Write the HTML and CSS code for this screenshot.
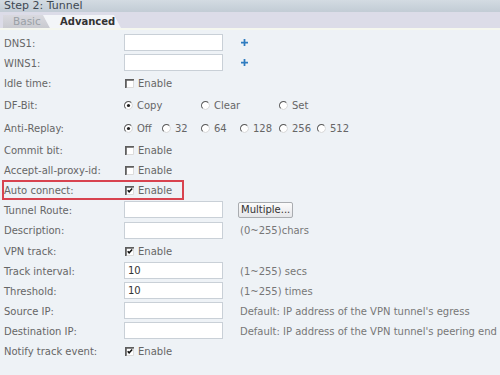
FILE: index.html
```html
<!DOCTYPE html>
<html>
<head>
<meta charset="utf-8">
<link rel="stylesheet" href="styles.css">
</head>
<body>
<svg class="defs" width="0" height="0">
  <symbol id="cb" viewBox="0 0 10 10">
    <rect x="0" y="0" width="10" height="10" fill="#fff"/>
    <path d="M0 1H10M1 0V10" stroke="#5e5e5e" stroke-width="2" fill="none"/>
    <path d="M9.5 2V9.5H2" stroke="#d6d6d6" stroke-width="1" fill="none"/>
  </symbol>
  <symbol id="cbon" viewBox="0 0 10 10">
    <rect x="0" y="0" width="10" height="10" fill="#fff"/>
    <path d="M0 1H10M1 0V10" stroke="#5e5e5e" stroke-width="2" fill="none"/>
    <path d="M9.5 2V9.5H2" stroke="#d6d6d6" stroke-width="1" fill="none"/>
    <path d="M3 4.6L4.6 6.4L8 2.8" stroke="#111" stroke-width="1.7" fill="none"/>
  </symbol>
  <symbol id="rd" viewBox="0 0 10 10">
    <circle cx="5" cy="5" r="4.3" fill="#fff"/>
    <path d="M1.9 8.1A4.3 4.3 0 0 1 8.1 1.9" stroke="#5a5a5a" stroke-width="1.2" fill="none"/>
    <path d="M8.1 1.9A4.3 4.3 0 0 1 1.9 8.1" stroke="#d4d4d4" stroke-width="1" fill="none"/>
  </symbol>
  <symbol id="rdon" viewBox="0 0 10 10">
    <circle cx="5" cy="5" r="4.3" fill="#fff"/>
    <path d="M1.9 8.1A4.3 4.3 0 0 1 8.1 1.9" stroke="#5a5a5a" stroke-width="1.2" fill="none"/>
    <path d="M8.1 1.9A4.3 4.3 0 0 1 1.9 8.1" stroke="#d4d4d4" stroke-width="1" fill="none"/>
    <circle cx="5" cy="5" r="1.8" fill="#222"/>
  </symbol>
  <symbol id="plus" viewBox="0 0 8 8">
    <path d="M3 0h2v3h3v2H5v3H3V5H0V3h3z" fill="#2f7cc0"/>
  </symbol>
</svg>
<div class="panel">
  <div class="title">Step 2: Tunnel</div>
  <div class="tabs">
    <span class="tab tab-basic">Basic</span>
    <span class="tab tab-adv">Advanced</span>
  </div>
  <div class="sep"></div>
  <div class="form">
    <div class="row"><span class="lbl">DNS1:</span><span class="ctl"><span class="inp"></span></span><span class="ext"><svg class="plus" width="7" height="7"><use href="#plus"/></svg></span></div>
    <div class="row"><span class="lbl">WINS1:</span><span class="ctl"><span class="inp"></span></span><span class="ext"><svg class="plus" width="7" height="7"><use href="#plus"/></svg></span></div>
    <div class="row r21"><span class="lbl">Idle time:</span><span class="ctl"><svg class="cb"><use href="#cb"/></svg>Enable</span></div>
    <div class="row tall"><span class="lbl">DF-Bit:</span><span class="ctl opts">
      <span class="opt w77"><svg class="rd"><use href="#rdon"/></svg>Copy</span>
      <span class="opt w78"><svg class="rd"><use href="#rd"/></svg>Clear</span>
      <span class="opt"><svg class="rd"><use href="#rd"/></svg>Set</span></span></div>
    <div class="row tall"><span class="lbl">Anti-Replay:</span><span class="ctl opts">
      <span class="opt w38"><svg class="rd"><use href="#rdon"/></svg>Off</span>
      <span class="opt w39"><svg class="rd"><use href="#rd"/></svg>32</span>
      <span class="opt w39"><svg class="rd"><use href="#rd"/></svg>64</span>
      <span class="opt w39"><svg class="rd"><use href="#rd"/></svg>128</span>
      <span class="opt w38"><svg class="rd"><use href="#rd"/></svg>256</span>
      <span class="opt"><svg class="rd"><use href="#rd"/></svg>512</span></span></div>
    <div class="row"><span class="lbl">Commit bit:</span><span class="ctl"><svg class="cb"><use href="#cb"/></svg>Enable</span></div>
    <div class="row"><span class="lbl">Accept-all-proxy-id:</span><span class="ctl"><svg class="cb"><use href="#cb"/></svg>Enable</span></div>
    <div class="row"><span class="lbl">Auto connect:</span><span class="ctl"><svg class="cb"><use href="#cbon"/></svg>Enable</span><span class="mark"></span></div>
    <div class="row"><span class="lbl">Tunnel Route:</span><span class="ctl"><span class="inp"></span></span><span class="ext"><span class="btn">Multiple...</span></span></div>
    <div class="row r21"><span class="lbl">Description:</span><span class="ctl"><span class="inp"></span></span><span class="ext hint">(0~255)chars</span></div>
    <div class="row"><span class="lbl">VPN track:</span><span class="ctl"><svg class="cb"><use href="#cbon"/></svg>Enable</span></div>
    <div class="row"><span class="lbl">Track interval:</span><span class="ctl"><span class="inp">10</span></span><span class="ext hint">(1~255) secs</span></div>
    <div class="row"><span class="lbl">Threshold:</span><span class="ctl"><span class="inp">10</span></span><span class="ext hint">(1~255) times</span></div>
    <div class="row"><span class="lbl">Source IP:</span><span class="ctl"><span class="inp"></span></span><span class="ext hint">Default: IP address of the VPN tunnel's egress</span></div>
    <div class="row"><span class="lbl">Destination IP:</span><span class="ctl"><span class="inp"></span></span><span class="ext hint">Default: IP address of the VPN tunnel's peering end</span></div>
    <div class="row"><span class="lbl">Notify track event:</span><span class="ctl"><svg class="cb"><use href="#cbon"/></svg>Enable</span></div>
  </div>
</div>
</body>
</html>
```
FILE: styles.css
```css
html, body { margin: 0; padding: 0; }
body {
  width: 500px; height: 375px; overflow: hidden;
  background: #eef2f6;
  font-family: "DejaVu Sans", Verdana, sans-serif;
  font-size: 10px;
  color: #666;
}
.defs { position: absolute; width: 0; height: 0; overflow: hidden; }
.panel { width: 500px; }
.title {
  height: 12px; line-height: 11px;
  padding-left: 4px;
  background: linear-gradient(#d3dbe2, #c2ccd5);
  color: #3e4852;
  font-size: 11px;
}
.tabs {
  height: 16px;
  background: #dcdce8;
  display: flex;
  align-items: flex-end;
  padding-left: 3px;
}
.tab {
  height: 13px; line-height: 13px;
  display: inline-block;
  flex-shrink: 0;
}
.tab-basic {
  width: 47px;
  padding-left: 10px;
  box-sizing: border-box;
  background: linear-gradient(#d9d9df, #c9cad0);
  color: #9aa0a6;
  font-size: 10.5px;
  clip-path: polygon(0 0, 40px 0, 47px 100%, 0 100%);
}
.tab-adv {
  width: 78px;
  margin-left: -7px;
  padding-left: 17px;
  box-sizing: border-box;
  background: #f3f5f8;
  color: #333;
  font-weight: bold;
  white-space: nowrap;
  clip-path: polygon(0 0, 71px 0, 78px 100%, 7px 100%);
}
.sep { height: 2px; background: #f5f7ef; }
.form { padding-top: 3px; }
.row {
  height: 20px;
  display: flex;
  align-items: center;
  position: relative;
}
.row.r21 { height: 21px; }
.row.tall { height: 23px; }
.lbl { width: 124px; flex-shrink: 0; padding-left: 4px; box-sizing: border-box; white-space: nowrap; }
.ctl { width: 114px; flex-shrink: 0; display: flex; align-items: center; white-space: nowrap; }
.ext { display: flex; align-items: center; white-space: nowrap; }
.hint { color: #777; padding-left: 2px; }
.inp {
  width: 94px; height: 15px;
  border: 1px solid #c9d0d7;
  background: #fff;
  color: #333;
  line-height: 15px;
  padding-left: 3px;
  margin-top: -1px;
  flex-shrink: 0;
}
.plus { margin-left: 3px; margin-top: -2px; }
.cb {
  flex-shrink: 0;
  width: 9px; height: 9px;
  margin: 0 4px 0 1px;
}
.opts { width: auto; }
.opt { display: inline-flex; align-items: center; flex-shrink: 0; }
.w77 { width: 77px; }
.w78 { width: 78px; }
.w38 { width: 38px; }
.w39 { width: 39px; }
.rd {
  flex-shrink: 0;
  width: 9px; height: 9px;
  margin: 0 4px 0 0;
}
.btn {
  height: 14px; line-height: 14px;
  padding: 0 2px;
  border: 1px solid #a9acb0;
  border-radius: 2px;
  background: linear-gradient(#fbfbfb, #e6e7ea);
  color: #333;
}
.mark {
  position: absolute;
  left: 2px; top: 0;
  width: 178px; height: 16px;
  border: 2px solid #d8434f;
}
```
